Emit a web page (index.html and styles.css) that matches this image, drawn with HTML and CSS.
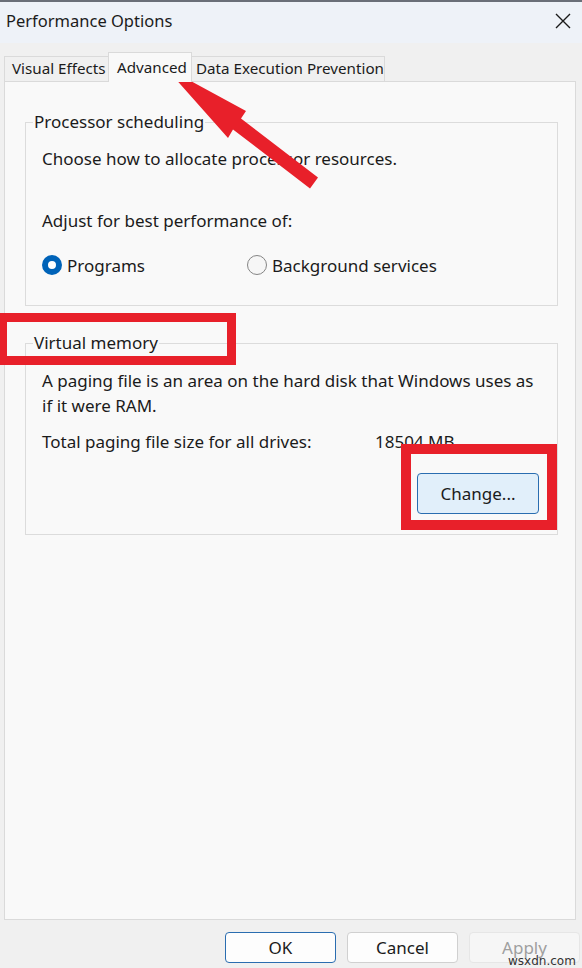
FILE: index.html
```html
<!DOCTYPE html>
<html>
<head>
<meta charset="utf-8">
<link rel="stylesheet" href="styles.css">
</head>
<body>
<div class="dialog">
  <div class="titlebar">
    <span class="title">Performance Options</span>
    <svg class="close" width="16" height="16" viewBox="0 0 16 16"><path d="M1 1L15 15M15 1L1 15" stroke="#1a1a1a" stroke-width="1.4" fill="none"/></svg>
  </div>
  <div class="tabs">
    <div class="tab t1">Visual Effects</div>
    <div class="tab active">Advanced</div>
    <div class="tab t3">Data Execution Prevention</div>
  </div>
  <div class="panel">
    <fieldset class="group proc">
      <legend>Processor scheduling</legend>
      <p class="line first">Choose how to allocate processor resources.</p>
      <p class="line adjust">Adjust for best performance of:</p>
      <div class="radios">
        <label class="radio"><span class="dot checked"></span>Programs</label>
        <label class="radio bg"><span class="dot"></span>Background services</label>
      </div>
    </fieldset>
    <fieldset class="group vm">
      <legend>Virtual memory</legend>
      <p class="line first">A paging file is an area on the hard disk that Windows uses as<br>if it were RAM.</p>
      <div class="total"><span class="total-label">Total paging file size for all drives:</span><span>18504 MB</span></div>
      <div class="change-row"><button class="btn change">Change...</button></div>
    </fieldset>
  </div>
  <div class="footer">
    <button class="btn default">OK</button>
    <button class="btn">Cancel</button>
    <button class="btn disabled">Apply</button>
  </div>
</div>
<svg class="arrow" width="582" height="968" viewBox="0 0 582 968">
  <polygon points="165,67 246,111 241,118.5 318,177.5 310,188.5 233,129.5 228,138" fill="#e8202a"/>
</svg>
<div class="mark mark-vm"></div>
<div class="mark mark-change"></div>
<div class="watermark">wsxdn.com</div>
</body>
</html>
```
FILE: styles.css
```css
* { box-sizing: border-box; }
html, body { margin: 0; padding: 0; }
body {
  width: 582px;
  height: 968px;
  overflow: hidden;
  background: #f0f0f0;
  font-family: "Noto Sans", "Open Sans", sans-serif;
  font-size: 17px;
  color: #1b1b1b;
  position: relative;
}
.dialog {
  display: flex;
  flex-direction: column;
  height: 968px;
}
.titlebar {
  height: 43px;
  background: #eef2f8;
  border-top: 2px solid #6a6f78;
  display: flex;
  align-items: center;
  justify-content: space-between;
  padding: 0 11px 0 6px;
}
.title { font-size: 16.5px; line-height: 24px; margin-top: -4px; }
.close { margin-top: -4px; }
.tabs {
  display: flex;
  align-items: flex-end;
  margin: 9px 0 0 4px;
  height: 29px;
  position: relative;
  z-index: 1;
}
.tab {
  height: 25px;
  line-height: 23px;
  font-size: 15.2px;
  white-space: nowrap;
  border: 1px solid #dadada;
  border-bottom: none;
  background: #f0f0f0;
}
.tab.t1 { width: 104px; padding-left: 7px; border-right: none; }
.tab.active {
  width: 84px;
  height: 30px;
  line-height: 29px;
  padding-left: 8px;
  background: #f9f9f9;
  margin-bottom: -1px;
}
.tab.t3 { width: 193px; padding-left: 4px; border-left: none; }
.panel {
  margin: 0 6px 0 4px;
  height: 839px;
  background: #f9f9f9;
  border: 1px solid #dadada;
  padding: 28px 17px 0 20px;
}
.group {
  margin: 0;
  border: 1px solid #dcdcdc;
  padding: 0 18px 0 16px;
  min-width: 0;
}
.group legend {
  padding: 0 1px;
  margin-left: -9px;
  line-height: 24px;
}
.line { margin: 0; line-height: 24px; white-space: nowrap; }
.line.first { margin-top: 13px; }
.proc .adjust { margin-top: 38px; }
.radios {
  display: flex;
  margin-top: 21px;
  height: 24px;
  line-height: 24px;
}
.radio { display: flex; align-items: center; width: 205px; }
.radio.bg { width: auto; }
.dot {
  width: 20px;
  height: 20px;
  border-radius: 50%;
  border: 1px solid #858585;
  background: #f6f6f6;
  margin-right: 5px;
  flex: none;
  margin-top: -2px;
}
.dot.checked {
  border: 6.5px solid #0063b8;
  background: #ffffff;
}
.proc { padding-bottom: 27px; }
.vm { margin-top: 25px; padding-bottom: 20px; }
.vm .first { line-height: 25px; }
.total { display: flex; margin-top: 12px; line-height: 24px; }
.total-label { width: 333px; }
.change-row { display: flex; justify-content: flex-end; margin-top: 19px; }
.btn {
  font-family: inherit;
  font-size: 17px;
  color: #1b1b1b;
  background: #fdfdfd;
  border: 1px solid #d0d0d0;
  border-radius: 4px;
  width: 111px;
  height: 31px;
  padding: 0;
}
.btn.change {
  width: 122px;
  height: 41px;
  background: #e1effa;
  border: 1px solid #2a6db0;
}
.footer {
  display: flex;
  justify-content: flex-end;
  gap: 11px;
  margin-top: 12px;
  padding-right: 2px;
}
.btn.default { border-color: #2a6db0; }
.btn.disabled { color: #9f9f9f; background: #f6f6f6; border-color: #e6e6e6; }
.arrow { position: absolute; left: 0; top: 0; pointer-events: none; }
.mark { position: absolute; border: 9px solid #e8202a; }
.mark-vm { left: -2px; top: 313px; width: 238px; height: 52px; }
.mark-change { left: 401px; top: 444px; width: 156px; height: 86px; border-width: 10px; }
.watermark {
  position: absolute;
  left: 508px;
  top: 954px;
  font-family: "DejaVu Sans", sans-serif;
  font-size: 12px;
  color: #333;
  line-height: 14px;
}
```
